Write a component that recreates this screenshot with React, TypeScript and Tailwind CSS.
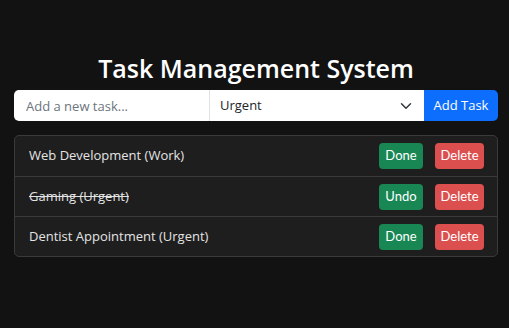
import React, { useState } from 'react';

interface Task {
  id: number;
  title: string;
  category: string;
  done: boolean;
}

const initialTasks: Task[] = [
  { id: 1, title: 'Web Development', category: 'Work', done: false },
  { id: 2, title: 'Gaming', category: 'Urgent', done: true },
  { id: 3, title: 'Dentist Appointment', category: 'Urgent', done: false },
];

export default function App() {
  const [tasks, setTasks] = useState<Task[]>(initialTasks);
  const [text, setText] = useState('');
  const [category, setCategory] = useState('Urgent');

  const addTask = () => {
    if (!text.trim()) return;
    setTasks([...tasks, { id: Date.now(), title: text.trim(), category, done: false }]);
    setText('');
  };

  return (
    <div className="min-h-[328px] bg-[#121212] text-[#e4e4e4] font-['Open_Sans','Noto_Sans',sans-serif]">
      <div className="pl-[14px] pt-[52px] w-[498px]">
        {/* ── Title ── */}
        <h1 className="text-center text-[25px] leading-[32px] font-semibold text-white mb-[6px]">
          Task Management System
        </h1>

        {/* ── Input group ── */}
        <div className="flex h-[31px] rounded-[5px] overflow-hidden">
          <input
            value={text}
            onChange={e => setText(e.target.value)}
            placeholder="Add a new task..."
            className="w-[196px] h-full bg-white px-[12px] text-[13px] text-[#212529] placeholder:text-[#6c757d] outline-none border-r border-[#dee2e6]"
          />
          <div className="relative w-[214px] h-full bg-white">
            <select
              value={category}
              onChange={e => setCategory(e.target.value)}
              className="appearance-none w-full h-full bg-white pl-[10px] pr-8 text-[13px] text-[#212529] outline-none"
            >
              <option>Urgent</option>
              <option>Work</option>
              <option>Personal</option>
            </select>
            <svg
              className="absolute right-[12px] top-1/2 -translate-y-1/2 pointer-events-none"
              width="12"
              height="12"
              viewBox="0 0 16 16"
              fill="none"
              stroke="#343a40"
              strokeWidth="2"
              strokeLinecap="round"
              strokeLinejoin="round"
            >
              <path d="m2 5 6 6 6-6" />
            </svg>
          </div>
          <button
            onClick={addTask}
            className="w-[74px] h-full bg-[#0d6efd] text-white text-[13px]"
          >
            Add Task
          </button>
        </div>

        {/* ── Task list ── */}
        <ul className="mt-[14px] rounded-[5px] border border-[#3a3a3a] bg-[#1e1e1e] overflow-hidden">
          {tasks.map((task, i) => (
            <li
              key={task.id}
              className={`flex items-center justify-between h-[40px] pl-[14px] pr-[13px] ${i > 0 ? 'border-t border-[#3a3a3a]' : ''}`}
            >
              <span className={`text-[13px] ${task.done ? 'line-through' : ''}`}>
                {task.title} ({task.category})
              </span>
              <div className="flex gap-[12px] font-['Lato',sans-serif]">
                <button
                  onClick={() => setTasks(tasks.map(t => (t.id === task.id ? { ...t, done: !t.done } : t)))}
                  className="w-[44px] h-[26px] rounded-[4px] bg-[#198754] text-white text-[13px]"
                >
                  {task.done ? 'Undo' : 'Done'}
                </button>
                <button
                  onClick={() => setTasks(tasks.filter(t => t.id !== task.id))}
                  className="w-[49px] h-[26px] rounded-[4px] bg-[#dc4f4f] text-white text-[13px]"
                >
                  Delete
                </button>
              </div>
            </li>
          ))}
        </ul>
      </div>
    </div>
  );
}
